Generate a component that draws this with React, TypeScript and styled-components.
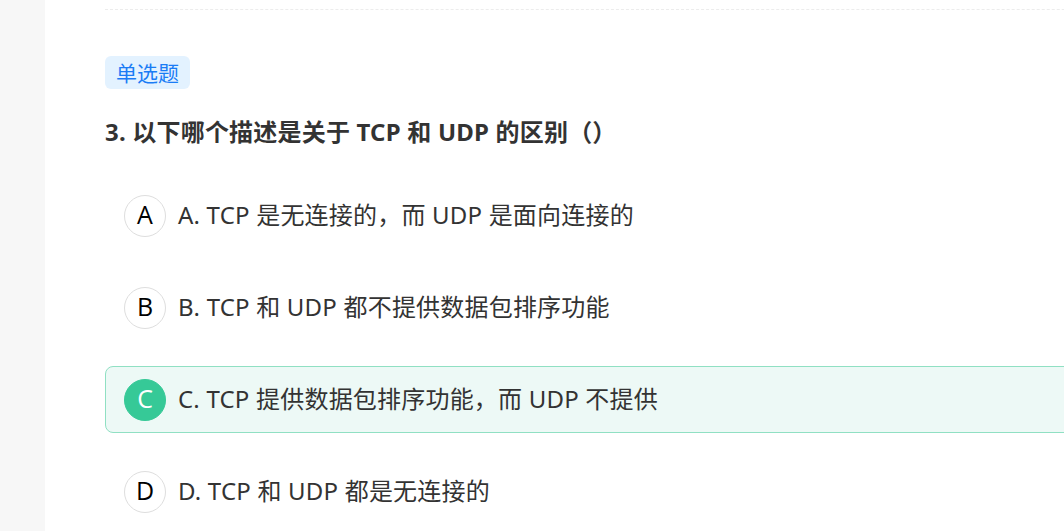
import React from "react";
import styled, { createGlobalStyle } from "styled-components";

const Global = createGlobalStyle`
  html, body { margin: 0; padding: 0; background: #fff; overflow: hidden; }
  body { font-family: "Noto Sans", "Noto Sans CJK SC", sans-serif; }
`;

const Page = styled.div`
  display: flex;
  width: 1064px;
  height: 531px;
  overflow: hidden;
`;

const Sidebar = styled.div`
  flex: 0 0 45px;
  background: #f7f7f7;
`;

const Main = styled.div`
  flex: 1;
  padding-left: 60px;
  overflow: hidden;
`;

const Content = styled.div`
  width: 1100px;
`;

const Divider = styled.div`
  margin-top: 9px;
  border-top: 1px dashed #ececec;
`;

const Tag = styled.div`
  display: inline-block;
  margin-top: 46px;
  height: 33px;
  line-height: 33px;
  padding: 0 11px;
  border-radius: 6px;
  background: #e3f2ff;
  color: #1a7cf5;
  font-size: 21px;
  font-family: "Noto Sans CJK SC", sans-serif;
`;

const Title = styled.div`
  margin-top: 27px;
  font-size: 24px;
  line-height: 32px;
  font-weight: 700;
  letter-spacing: 0.2px;
  color: #333;
  font-family: "Noto Sans", "Noto Sans CJK SC", sans-serif;
`;

const Options = styled.div`
  margin-top: 34px;
  display: flex;
  flex-direction: column;
  gap: 25px;
`;

const Option = styled.div<{ $selected?: boolean }>`
  display: flex;
  align-items: center;
  gap: 12px;
  height: 67px;
  box-sizing: border-box;
  padding-left: 18px;
  border-radius: 8px;
  border: 1px solid ${(p) => (p.$selected ? "#90e0c3" : "transparent")};
  background: ${(p) => (p.$selected ? "#edf9f6" : "transparent")};
`;

const Circle = styled.div<{ $selected?: boolean }>`
  width: 42px;
  height: 42px;
  box-sizing: border-box;
  padding-bottom: 3px;
  border-radius: 50%;
  display: flex;
  align-items: center;
  justify-content: center;
  font-size: 25px;
  line-height: 1;
  font-family: "Open Sans", "Noto Sans", sans-serif;
  border: 1px solid ${(p) => (p.$selected ? "#36c997" : "#dedede")};
  background: ${(p) => (p.$selected ? "#36c997" : "#fff")};
  color: ${(p) => (p.$selected ? "#fff" : "#000")};
`;

const OptionText = styled.div`
  font-size: 24px;
  line-height: 30px;
  letter-spacing: 0.2px;
  margin-top: -2px;
  color: #333;
  font-family: "Noto Sans", "Noto Sans CJK SC", sans-serif;
`;

const options = [
  { key: "A", text: "A. TCP 是无连接的，而 UDP 是面向连接的" },
  { key: "B", text: "B. TCP 和 UDP 都不提供数据包排序功能" },
  { key: "C", text: "C. TCP 提供数据包排序功能，而 UDP 不提供", selected: true },
  { key: "D", text: "D. TCP 和 UDP 都是无连接的" },
];

export default function App() {
  return (
    <>
      <Global />
      <Page>
        <Sidebar />
        <Main>
          <Content>
            <Divider />
            <Tag>单选题</Tag>
            <Title>3. 以下哪个描述是关于 TCP 和 UDP 的区别（）</Title>
            <Options>
              {options.map((o) => (
                <Option key={o.key} $selected={o.selected}>
                  <Circle $selected={o.selected}>{o.key}</Circle>
                  <OptionText>{o.text}</OptionText>
                </Option>
              ))}
            </Options>
          </Content>
        </Main>
      </Page>
    </>
  );
}
